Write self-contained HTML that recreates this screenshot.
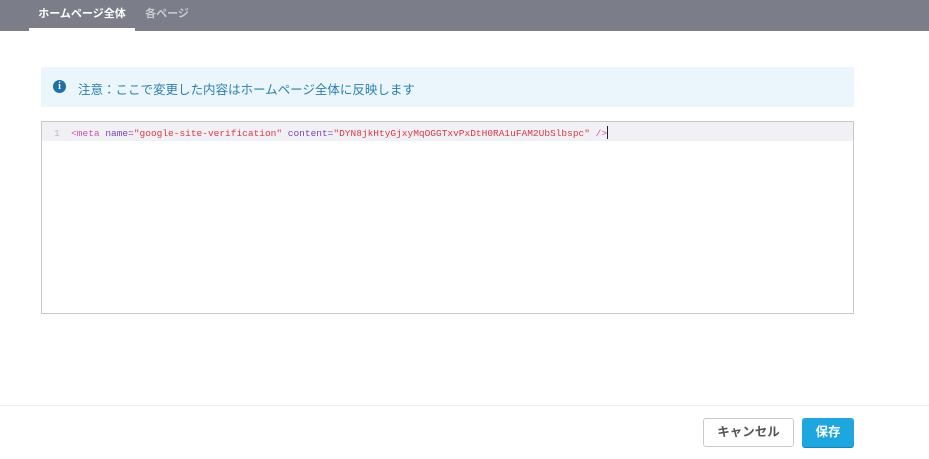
<!DOCTYPE html>
<html><head><meta charset="utf-8"><style>
body{margin:0;width:929px;height:459px;background:#fff;font-family:"Liberation Sans","Noto Sans CJK JP",sans-serif;position:relative;overflow:hidden}
.hdr{position:absolute;left:0;top:0;width:929px;height:31px;background:#7b7e89}
.tab{position:absolute;top:0;height:31px;line-height:29px;font-size:11px;font-weight:bold;text-align:center}
.t1{left:29px;width:106px;color:#fff;border-bottom:3px solid #fff;box-sizing:border-box}
.t2{left:135px;width:64px;color:#c9cad0}
.note{position:absolute;left:41px;top:67px;width:813px;height:40px;background:#eaf6fb;border-radius:2px}
.note .i{position:absolute;left:12px;top:13px;width:13px;height:13px;border-radius:50%;background:#1d6fa5;color:#fff;font-size:10px;font-weight:bold;text-align:center;line-height:13px;font-family:"Liberation Serif",serif}
.note .tx{position:absolute;left:37px;top:12px;font-size:12.5px;color:#2f7fae}
.ed{position:absolute;left:41px;top:121px;width:811px;height:191px;border:1px solid #c8c8cc;background:#fff}
.ln{position:absolute;left:0;top:0;width:811px;height:19px;background:#f1f1f5}
.code{position:absolute;left:12px;top:4px;font-family:"Liberation Mono",monospace;font-size:9.5px;white-space:pre;color:#7a43b6}
.g{color:#bbb}.tg{color:#d04fb0}.s{color:#d8384a}
.cur{display:inline-block;width:1px;height:13px;background:#222;vertical-align:-3px}
.ft{position:absolute;left:0;top:405px;width:929px;height:1px;background:#eeeef0}
.b1{position:absolute;left:703px;top:418px;width:89px;height:27px;border:1px solid #c8cad2;border-radius:3px;font-size:12.5px;font-weight:bold;color:#555;text-align:center;line-height:27px}
.b2{position:absolute;left:802px;top:418px;width:52px;height:29px;background:#1ea7de;border-radius:3px;font-size:12.5px;font-weight:bold;color:#fff;text-align:center;line-height:29px;box-shadow:0 1px 0 #1785b3}
</style></head><body>
<div class="hdr"><div class="tab t1">ホームページ全体</div><div class="tab t2">各ページ</div></div>
<div class="note"><div class="i">i</div><div class="tx">注意：ここで変更した内容はホームページ全体に反映します</div></div>
<div class="ed"><div class="ln"></div><div class="code"><span class="g">1</span>  <span class="tg">&lt;meta</span> name=<span class="s">"google-site-verification"</span> content=<span class="s">"DYN8jkHtyGjxyMqOGGTxvPxDtH0RA1uFAM2UbSlbspc"</span> <span class="tg">/&gt;</span><span class="cur"></span></div></div>
<div class="ft"></div>
<div class="b1">キャンセル</div>
<div class="b2">保存</div>
</body></html>
